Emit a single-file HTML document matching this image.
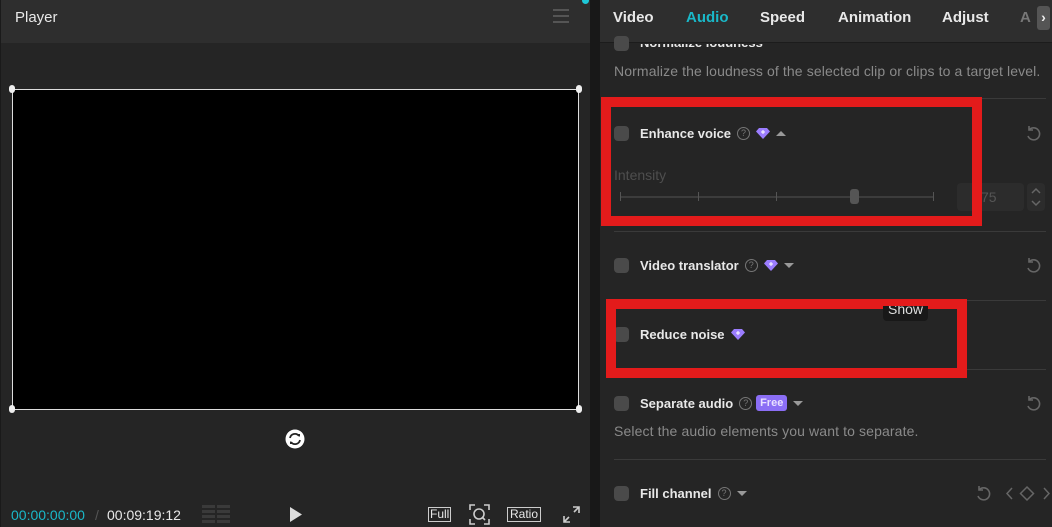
<!DOCTYPE html>
<html><head><style>
*{margin:0;padding:0;box-sizing:border-box}
body{width:1052px;height:527px;background:#1a1a1a;font-family:"Liberation Sans",sans-serif;position:relative;overflow:hidden}
.a{position:absolute}
.t{color:#e8e8e8;font-size:13px;font-weight:bold}
.row{position:absolute;left:640px;display:flex;align-items:center;height:16px;gap:6px}
.cb{position:absolute;width:15px;height:15px;border-radius:4px;background:#4a4a4a}
.hr{position:absolute;left:614px;width:432px;height:1px;background:#3a3a3a}
.desc{color:#8a8a8a;font-size:14px;letter-spacing:0.12px}
.red{position:absolute;border:10px solid #e31b1b}
.q{width:13px;height:13px;border:1px solid #777;border-radius:50%;color:#777;font-size:9px;text-align:center;line-height:11px;font-weight:normal}
.dn{width:0;height:0;border:5px solid transparent;border-top:5px solid #999;border-bottom:0}
.up{width:0;height:0;border:5px solid transparent;border-bottom:5px solid #999;border-top:0}
</style></head><body>
<div class="a" style="left:0;top:0;width:590px;height:527px;background:#252525"></div>
<div class="a" style="left:0;top:0;width:590px;height:43px;background:#2e2e2e"></div>
<div class="a" style="left:0;top:0;width:1px;height:527px;background:#1a1a1a"></div>
<div class="a" style="left:15px;top:9px;color:#e8e8e8;font-size:15px">Player</div>
<div class="a" style="left:553px;top:9px;width:16px;height:2px;background:#555;box-shadow:0 6px 0 #555,0 12px 0 #555"></div>
<div class="a" style="left:582px;top:-3px;width:7px;height:7px;border-radius:50%;background:#1ec8d8"></div>
<div class="a" style="left:12px;top:89px;width:567px;height:321px;background:#000;border:1px solid #ddd"></div>
<div class="a" style="left:9px;top:85px;width:6px;height:8px;border-radius:3px;background:#eee"></div>
<div class="a" style="left:576px;top:85px;width:6px;height:8px;border-radius:3px;background:#eee"></div>
<div class="a" style="left:9px;top:405px;width:6px;height:8px;border-radius:3px;background:#eee"></div>
<div class="a" style="left:576px;top:405px;width:6px;height:8px;border-radius:3px;background:#eee"></div>
<svg class="a" style="left:285px;top:429px" width="20" height="20" viewBox="0 0 20 20"><circle cx="10" cy="10" r="9.5" fill="#fff"/><path d="M5 9a5 5 0 0 1 9-2" fill="none" stroke="#252525" stroke-width="1.8"/><path d="M15 11a5 5 0 0 1-9 2" fill="none" stroke="#252525" stroke-width="1.8"/><path d="M12 5l3 0 0 3z M8 15l-3 0 0-3z" fill="#252525"/></svg>
<div class="a" style="left:11px;top:507px;font-size:14px;color:#1ab8c8">00:00:00:00</div>
<div class="a" style="left:95px;top:507px;font-size:14px;color:#555">/</div>
<div class="a" style="left:107px;top:507px;font-size:14px;color:#e8e8e8">00:09:19:12</div>
<div class="a" style="left:202px;top:505px;width:28px;height:19px;background:repeating-linear-gradient(#3a3a3a 0 3px,transparent 3px 5px)"></div>
<div class="a" style="left:215px;top:505px;width:2px;height:19px;background:#252525"></div>
<svg class="a" style="left:289px;top:506px" width="14" height="17"><path d="M1 1L13 8.5 1 16z" fill="#ddd"/></svg>
<div class="a" style="left:428px;top:507px;border:1px solid #ccc;color:#e8e8e8;font-size:12px;padding:0 1px;line-height:13px">Full</div>
<svg class="a" style="left:469px;top:504px" width="21" height="21" fill="none" stroke="#ccc" stroke-width="1.6"><path d="M1 6V1h5M15 1h5v5M20 15v5h-5M6 20H1v-5"/><circle cx="10" cy="10" r="5"/><path d="M13 13l3 3"/></svg>
<div class="a" style="left:507px;top:507px;border:1px solid #ccc;color:#e8e8e8;font-size:12px;padding:0 2px;line-height:13px">Ratio</div>
<svg class="a" style="left:563px;top:506px" width="17" height="17" fill="none" stroke="#ccc" stroke-width="1.6"><path d="M10 1h6v6M16 1l-5 5M7 16H1v-6M1 16l5-5"/></svg>

<div class="a" style="left:600px;top:0;width:452px;height:527px;background:#252525"></div>
<div class="a" style="left:600px;top:0;width:452px;height:43px;background:#2e2e2e;border-bottom:1px solid #1c1c1c"></div>
<div class="a t" style="left:613px;top:9px;font-size:15px">Video</div>
<div class="a t" style="left:686px;top:9px;font-size:15px;color:#1ab8c8">Audio</div>
<div class="a t" style="left:760px;top:9px;font-size:15px">Speed</div>
<div class="a t" style="left:838px;top:9px;font-size:15px">Animation</div>
<div class="a t" style="left:942px;top:9px;font-size:15px">Adjust</div>
<div class="a t" style="left:1020px;top:9px;font-size:15px;color:#777">A</div>
<div class="a" style="left:1037px;top:6px;width:13px;height:24px;border-radius:3px;background:#555;color:#eee;font-size:14px;text-align:center;line-height:22px;font-weight:bold">›</div>

<div class="cb" style="left:614px;top:36px"></div>
<div class="a t" style="left:640px;top:35px;clip-path:inset(9px 0 0 0)">Normalize loudness</div>
<div class="a desc" style="left:614px;top:63px">Normalize the loudness of the selected clip or clips to a target level.</div>
<div class="hr" style="top:98px"></div>

<div class="cb" style="left:614px;top:126px"></div>
<div class="row t" style="top:125px"><span>Enhance voice</span><div class="q">?</div><svg width="14" height="11" viewBox="0 0 14 11"><path d="M3 0h8l3 3.5L7 11 0 3.5z" fill="#9b7dff"/><path d="M7 2v4M5 4h4" stroke="#fff" stroke-width="1"/></svg><div class="up"></div></div>
<svg class="a" style="left:1025px;top:125px" width="17" height="17" fill="none" stroke="#666" stroke-width="1.6"><path d="M4 5A6 6 0 1 1 3 11"/><path d="M4 1v4h4"/></svg>
<div class="a" style="left:614px;top:167px;color:#4e4e4e;font-size:14px">Intensity</div>
<div class="a" style="left:620px;top:196px;width:314px;height:2px;background:#3c3c3c"></div>
<div class="a" style="left:620px;top:192px;width:1px;height:9px;background:#555;box-shadow:78px 0 #555,156px 0 #555,313px 0 #555"></div>
<div class="a" style="left:850px;top:189px;width:9px;height:15px;border-radius:3px;background:#555"></div>
<div class="a" style="left:957px;top:183px;width:67px;height:28px;border-radius:4px;background:#2c2c2c;color:#555;font-size:14px;padding:6px 0 0 24px">75</div>
<div class="a" style="left:1027px;top:183px;width:18px;height:28px;border-radius:4px;background:#2c2c2c"></div>
<svg class="a" style="left:1030px;top:186px" width="12" height="22" fill="none" stroke="#666" stroke-width="1.5"><path d="M2 7l4-4 4 4M2 15l4 4 4-4"/></svg>
<div class="hr" style="top:231px"></div>

<div class="cb" style="left:614px;top:258px"></div>
<div class="row t" style="top:257px"><span>Video translator</span><div class="q">?</div><svg width="14" height="11" viewBox="0 0 14 11"><path d="M3 0h8l3 3.5L7 11 0 3.5z" fill="#9b7dff"/><path d="M7 2v4M5 4h4" stroke="#fff" stroke-width="1"/></svg><div class="dn"></div></div>
<svg class="a" style="left:1025px;top:257px" width="17" height="17" fill="none" stroke="#666" stroke-width="1.6"><path d="M4 5A6 6 0 1 1 3 11"/><path d="M4 1v4h4"/></svg>
<div class="hr" style="top:300px"></div>

<div class="cb" style="left:614px;top:327px"></div>
<div class="row t" style="top:326px"><span>Reduce noise</span><svg width="14" height="11" viewBox="0 0 14 11"><path d="M3 0h8l3 3.5L7 11 0 3.5z" fill="#9b7dff"/><path d="M7 2v4M5 4h4" stroke="#fff" stroke-width="1"/></svg></div>
<div class="hr" style="top:369px"></div>

<div class="cb" style="left:614px;top:396px"></div>
<div class="row t" style="top:395px"><span>Separate audio</span><div class="q">?</div><div style="width:31px;height:16px;border-radius:3px;background:#8b6ef5;color:#e8e0ff;font-size:11px;text-align:center;line-height:16px;margin-left:-2px">Free</div><div class="dn"></div></div>
<svg class="a" style="left:1025px;top:395px" width="17" height="17" fill="none" stroke="#666" stroke-width="1.6"><path d="M4 5A6 6 0 1 1 3 11"/><path d="M4 1v4h4"/></svg>
<div class="a desc" style="left:614px;top:423px">Select the audio elements you want to separate.</div>
<div class="hr" style="top:459px"></div>

<div class="cb" style="left:614px;top:486px"></div>
<div class="row t" style="top:485px"><span>Fill channel</span><div class="q">?</div><div class="dn"></div></div>
<svg class="a" style="left:975px;top:485px" width="17" height="17" fill="none" stroke="#666" stroke-width="1.6"><path d="M4 5A6 6 0 1 1 3 11"/><path d="M4 1v4h4"/></svg>
<svg class="a" style="left:1006px;top:485px" width="44" height="17" fill="none" stroke="#666" stroke-width="1.5"><path d="M6 3L1 8.5 6 14M38 3l5 5.5L38 14M21 2l6.5 6.5L21 15l-6.5-6.5z"/></svg>

<div class="a" style="left:590px;top:0;width:10px;height:527px;background:#181818"></div>
<div class="red" style="left:601px;top:97px;width:381px;height:129px"></div>
<div class="red" style="left:606px;top:299px;width:361px;height:79px"></div>
<div class="a" style="left:883px;top:306px;width:45px;height:15px;border-radius:0 0 4px 4px;background:#181818;overflow:hidden"><div style="color:#ddd;font-size:14px;text-align:center;margin-top:-5px">Show</div></div>
</body></html>
